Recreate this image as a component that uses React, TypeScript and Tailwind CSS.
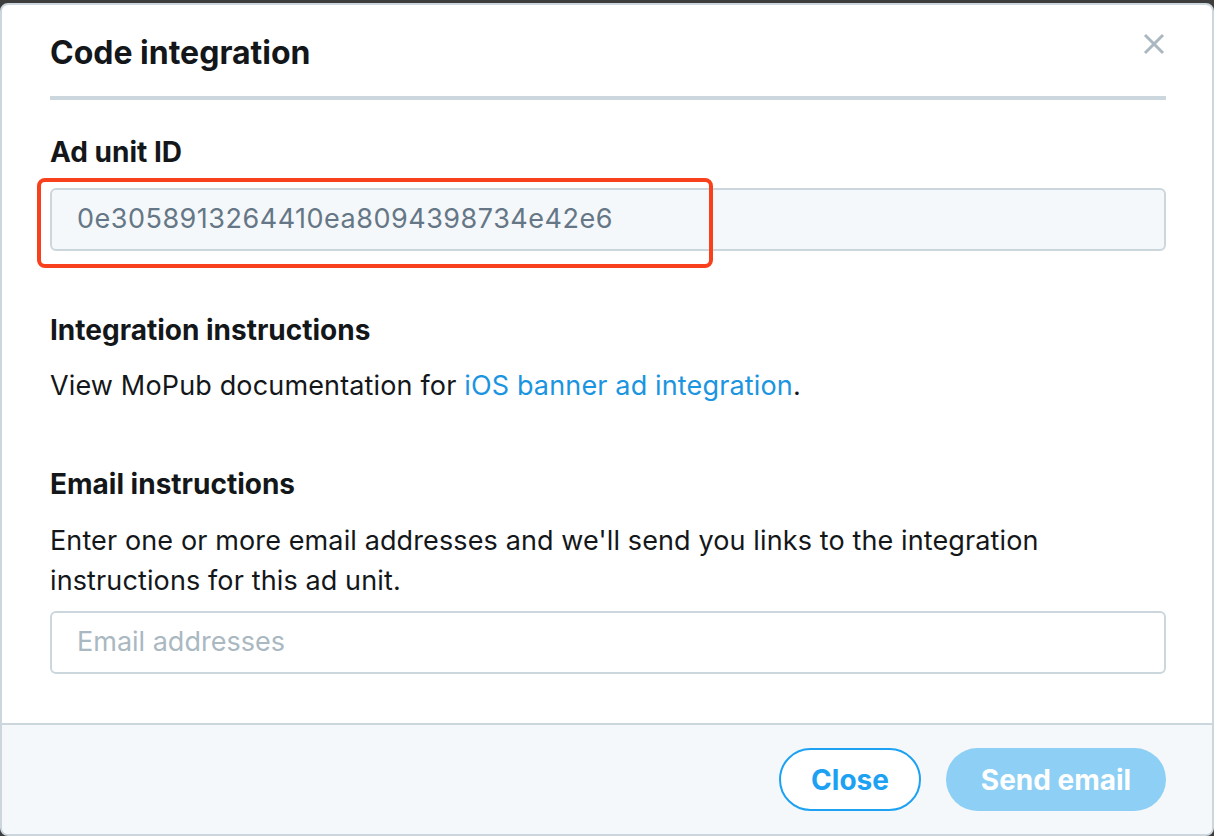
import React from "react";

export default function App() {
  return (
    <div className="w-[1214px] h-[836px] bg-[#3d3d3d] pt-[3px] overflow-hidden" style={{ fontFamily: "Inter, 'Noto Sans', sans-serif" }}>
      <div className="h-[833px] w-[1214px] bg-white border-2 border-[#ccd6dd] rounded-lg flex flex-col overflow-hidden">
        <div className="flex-1 pl-[48px] pr-[46px]">
          <div className="flex items-start justify-between pt-[28px] pb-[23px] border-b-4 border-[#ccd6dd]">
            <h1 className="text-[32px] font-bold text-[#14171a] leading-[40px]">Code integration</h1>
            <svg width="22" height="22" viewBox="0 0 22 22" className="mr-[1px]">
              <path d="M2 2 L20 20 M20 2 L2 20" stroke="#aab8c2" strokeWidth="3" strokeLinecap="butt" />
            </svg>
          </div>
          <div className="pt-[35px]">
            <h2 className="text-[28px] font-bold text-[#14171a] leading-[34px]">Ad unit ID</h2>
            <div className="relative mt-[19px]">
              <div className="h-[63px] rounded-md border-2 border-[#ccd6dd] bg-[#f5f8fa] flex items-center pl-[25px] text-[27px] tracking-[0.5px] text-[#657786]">
                0e3058913264410ea8094398734e42e6
              </div>
              <div className="absolute left-[-13px] top-[-10px] w-[676px] h-[90px] border-4 border-[#f8401c] rounded-lg pointer-events-none" />
            </div>
            <h2 className="mt-[62px] text-[28px] font-bold text-[#14171a] leading-[34px]">Integration instructions</h2>
            <p className="mt-[22px] text-[27px] tracking-[0.15px] text-[#14171a] leading-[34px]">
              View MoPub documentation for <span className="text-[#1b95e0]">iOS banner ad integration</span>.
            </p>
            <h2 className="mt-[64px] text-[28px] font-bold text-[#14171a] leading-[34px]">Email instructions</h2>
            <p className="mt-[20px] text-[27px] tracking-[0.12px] text-[#14171a] leading-[40px]">
              Enter one or more email addresses and we'll send you links to the integration<br />instructions for this ad unit.
            </p>
            <div className="mt-[10px] h-[63px] rounded-md border-2 border-[#ccd6dd] bg-white flex items-center pl-[25px] text-[27px] text-[#aab8c2]">
              Email addresses
            </div>
          </div>
        </div>
        <div className="h-[111px] bg-[#f5f8fa] border-t-2 border-[#ccd6dd] flex items-center justify-end gap-[25px] pr-[46px] shrink-0">
          <button className="h-[63px] w-[142px] rounded-full border-2 border-[#1da1f2] bg-white text-[#1da1f2] font-bold text-[28px]">Close</button>
          <button className="h-[63px] w-[220px] rounded-full bg-[#8ecff5] text-white font-bold text-[28px]">Send email</button>
        </div>
      </div>
    </div>
  );
}
